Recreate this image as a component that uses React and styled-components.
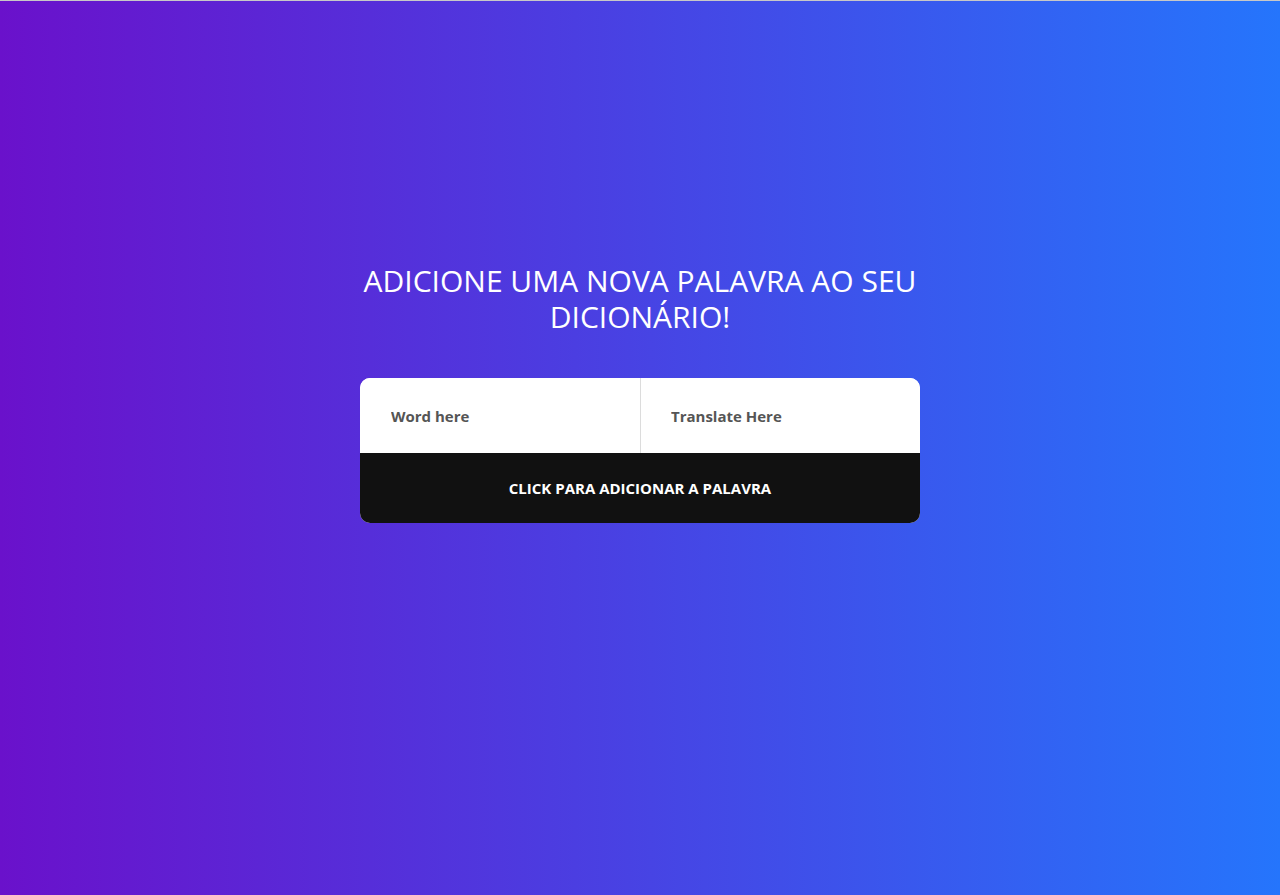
import React from "react";
import styled, { createGlobalStyle } from "styled-components";

const GlobalStyle = createGlobalStyle`
  * { box-sizing: border-box; }
  html, body { margin: 0; padding: 0; height: 100%; }
  body { font-family: "Open Sans", "Liberation Sans", sans-serif; }
  #root { min-height: 100%; }
`;

const Page = styled.main`
  min-height: 895px;
  border-top: 1px solid #c8c8c8;
  background: linear-gradient(to right, #6a11cb 0%, #2575fc 100%);
  display: flex;
  flex-direction: column;
  align-items: center;
  padding-top: 262px;
`;

const Title = styled.h1`
  width: 560px;
  margin: 0 0 43px;
  color: #fff;
  font-family: "Open Sans", "Liberation Sans", sans-serif;
  font-weight: 400;
  font-size: 30px;
  line-height: 36px;
  text-align: center;
  text-transform: uppercase;
`;

const Card = styled.form`
  width: 560px;
  border-radius: 10px;
  overflow: hidden;
  background: #fff;
  display: flex;
  flex-direction: column;
`;

const Fields = styled.div`
  display: grid;
  grid-template-columns: 1fr 1fr;
  height: 75px;
`;

const Field = styled.input`
  border: none;
  border-left: ${(p) => (p.$divider ? "1px solid #dcdcdc" : "none")};
  outline: none;
  padding: 0 30px 0 ${(p) => (p.$divider ? "30px" : "31px")};
  font-family: "Open Sans", "Liberation Sans", sans-serif;
  font-weight: 700;
  font-size: 15px;
  color: #333;
  background: #fff;
  &::placeholder { color: #555; opacity: 1; }
`;

const Submit = styled.button`
  height: 70px;
  border: none;
  background: #111;
  color: #fff;
  font-family: "Open Sans", "Liberation Sans", sans-serif;
  font-weight: 700;
  font-size: 15px;
  text-transform: uppercase;
  cursor: pointer;
`;

export default function App() {
  return (
    <>
      <GlobalStyle />
      <Page>
        <Title>Adicione uma nova palavra ao seu dicionário!</Title>
        <Card onSubmit={(e) => e.preventDefault()}>
          <Fields>
            <Field placeholder="Word here" />
            <Field $divider placeholder="Translate Here" />
          </Fields>
          <Submit type="submit">Click para adicionar a palavra</Submit>
        </Card>
      </Page>
    </>
  );
}
